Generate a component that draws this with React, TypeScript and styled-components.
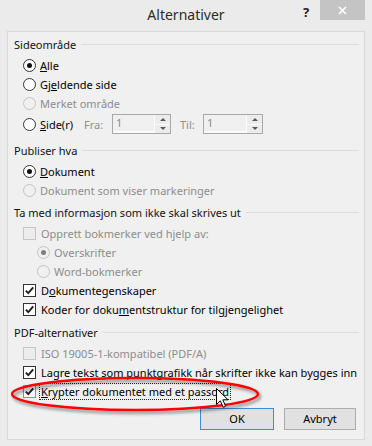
import React from "react"
import styled, { createGlobalStyle } from "styled-components"

const GlobalStyle = createGlobalStyle`
  html, body {
    margin: 0;
    padding: 0;
    background: #ebebeb;
  }
  body {
    font-family: "Noto Sans", "Segoe UI", sans-serif;
    font-size: 11px;
  }
`

const Window = styled.div`
  position: relative;
  width: 372px;
  height: 446px;
  display: flex;
  flex-direction: column;
  background: #ebebeb;
  overflow: hidden;
`

const TitleBar = styled.div`
  height: 31px;
  flex: none;
  display: grid;
  grid-template-columns: 1fr auto 1fr;
  align-items: start;
`

const Title = styled.div`
  grid-column: 2;
  padding-top: 4px;
  font-size: 14px;
  line-height: 22px;
  color: #2b2b2b;
`

const Caption = styled.div`
  grid-column: 3;
  justify-self: end;
  display: flex;
  margin-right: 7px;
`

const HelpButton = styled.div`
  width: 28px;
  height: 20px;
  padding-top: 2px;
  line-height: 20px;
  text-align: center;
  font-size: 13px;
  font-weight: bold;
  color: #222;
`

const CloseButton = styled.div`
  width: 45px;
  height: 20px;
  background: #c4c4c4;
  display: flex;
  align-items: center;
  justify-content: center;
`

const Panel = styled.div`
  flex: 1;
  margin: 0 7px 6px 7px;
  border: 1px solid #d9d9d9;
  background: #f0f0f0;
  padding: 2px 5px 0 6px;
  display: flex;
  flex-direction: column;
`

const Section = styled.div<{ $gap: number }>`
  margin-top: ${p => p.$gap}px;
  display: flex;
  flex-direction: column;
`

const Heading = styled.div`
  height: 20px;
  margin-bottom: 2px;
  display: flex;
  align-items: center;
  gap: 5px;
  color: #111;
  white-space: nowrap;

  &::after {
    content: "";
    flex: 1;
    border-top: 1px solid #dcdcdc;
  }
`

const Row = styled.div<{ $indent?: number; $h?: number; $disabled?: boolean }>`
  height: ${p => p.$h ?? 19}px;
  padding-left: ${p => p.$indent ?? 9}px;
  display: flex;
  align-items: center;
  color: ${p => (p.$disabled ? "#8d8d8d" : "#000")};
  white-space: nowrap;
`

const RadioCircle = styled.span<{ $checked?: boolean; $disabled?: boolean }>`
  box-sizing: border-box;
  width: 13px;
  height: 13px;
  margin-right: 4px;
  border-radius: 50%;
  border: 1px solid ${p => (p.$disabled ? "#c3c3c3" : "#333")};
  background: ${p => (p.$disabled ? "#f0f0f0" : "#fff")};
  display: flex;
  align-items: center;
  justify-content: center;
  flex: none;

  &::after {
    content: "";
    display: ${p => (p.$checked ? "block" : "none")};
    width: 5px;
    height: 5px;
    border-radius: 50%;
    background: ${p => (p.$disabled ? "#7f7f7f" : "#111")};
  }
`

const CheckBox = styled.span<{ $disabled?: boolean; $hover?: boolean }>`
  box-sizing: border-box;
  width: 13px;
  height: 13px;
  margin-right: 5px;
  border: 1px solid ${p => (p.$disabled ? "#c6c6c6" : p.$hover ? "#5b9fdf" : "#333")};
  background: ${p => (p.$disabled ? "#ececec" : "#fff")};
  display: flex;
  flex: none;
`

const FocusLabel = styled.span`
  margin-left: -2px;
  padding: 0 1px;
  line-height: 15px;
  border: 1px dotted #222;
`

const Key = styled.u`
  text-underline-offset: 1px;
`

const FieldLabel = styled.span<{ $w: number; $gap?: number }>`
  width: ${p => p.$w}px;
  margin-left: ${p => p.$gap ?? 0}px;
  color: #8d8d8d;
  flex: none;
`

const SideLabel = styled.span`
  width: 44px;
  flex: none;
`

const Spin = styled.div<{ $w: number }>`
  box-sizing: border-box;
  width: ${p => p.$w}px;
  height: 20px;
  border: 1px solid #a8a8a8;
  background: #f0f0f0;
  display: flex;
  flex: none;
`

const SpinValue = styled.div`
  flex: 1;
  padding-left: 3px;
  line-height: 16px;
  color: #8a8a8a;
  border-bottom: 2px solid #fbfbfb;
`

const SpinArrows = styled.div`
  width: 15px;
  display: flex;
  flex-direction: column;
  border-left: 1px solid #fbfbfb;
`

const SpinArrow = styled.div<{ $down?: boolean }>`
  flex: 1;
  display: flex;
  align-items: center;
  justify-content: center;
  background: #ececec;
  border-bottom: ${p => (p.$down ? "none" : "1px solid #fbfbfb")};

  &::after {
    content: "";
    border-left: 3px solid transparent;
    border-right: 3px solid transparent;
    ${p => (p.$down ? "border-top: 3px solid #5a5a5a;" : "border-bottom: 3px solid #5a5a5a;")}
  }
`

const ButtonRow = styled.div`
  margin-top: 7px;
  margin-right: 3px;
  display: flex;
  justify-content: flex-end;
  gap: 10px;
`

const Button = styled.div<{ $w: number; $default?: boolean }>`
  box-sizing: border-box;
  width: ${p => p.$w}px;
  height: 22px;
  line-height: 20px;
  text-align: center;
  background: #e1e1e1;
  border: 1px solid ${p => (p.$default ? "#3c8ddb" : "#adadad")};
  color: #000;
`

const Overlay = styled.svg`
  position: absolute;
  left: 0;
  top: 0;
  pointer-events: none;
`

const Check = () => (
  <svg width="11" height="11" viewBox="0 0 11 11">
    <path d="M1.8 5.6 L4.3 8.2 L9.2 2.3" fill="none" stroke="#1e1e1e" strokeWidth="1.9" />
  </svg>
)

type OptionProps = {
  checked?: boolean
  disabled?: boolean
  indent?: number
  children: React.ReactNode
}

const RadioOption = ({ checked, disabled, indent, children }: OptionProps) => (
  <Row $indent={indent} $disabled={disabled}>
    <RadioCircle $checked={checked} $disabled={disabled} />
    {children}
  </Row>
)

const CheckOption = ({ checked, disabled, indent, children }: OptionProps) => (
  <Row $indent={indent} $disabled={disabled}>
    <CheckBox $disabled={disabled}>{checked && <Check />}</CheckBox>
    {children}
  </Row>
)

const SpinBox = ({ w }: { w: number }) => (
  <Spin $w={w}>
    <SpinValue>1</SpinValue>
    <SpinArrows>
      <SpinArrow />
      <SpinArrow $down />
    </SpinArrows>
  </Spin>
)

export default function App() {
  return (
    <>
      <GlobalStyle />
      <Window>
        <TitleBar>
          <Title>Alternativer</Title>
          <Caption>
            <HelpButton>?</HelpButton>
            <CloseButton>
              <svg width="9" height="9" viewBox="0 0 9 9">
                <path d="M1 1 L8 8 M8 1 L1 8" stroke="#fff" strokeWidth="1.6" />
              </svg>
            </CloseButton>
          </Caption>
        </TitleBar>

        <Panel>
          <Section $gap={0}>
            <Heading>Sideområde</Heading>
            <RadioOption checked>
              <span><Key>A</Key>lle</span>
            </RadioOption>
            <RadioOption>
              <span>Gj<Key>e</Key>ldende side</span>
            </RadioOption>
            <RadioOption disabled>Merket område</RadioOption>
            <Row $h={22}>
              <RadioCircle />
              <SideLabel><Key>S</Key>ide(r)</SideLabel>
              <FieldLabel $w={28}>Fra:</FieldLabel>
              <SpinBox w={59} />
              <FieldLabel $w={23} $gap={9}>Til:</FieldLabel>
              <SpinBox w={60} />
            </Row>
          </Section>

          <Section $gap={5}>
            <Heading>Publiser hva</Heading>
            <RadioOption checked>
              <span><Key>D</Key>okument</span>
            </RadioOption>
            <RadioOption disabled>Dokument som viser markeringer</RadioOption>
          </Section>

          <Section $gap={2}>
            <Heading>Ta med informasjon som ikke skal skrives ut</Heading>
            <CheckOption disabled>Opprett bokmerker ved hjelp av:</CheckOption>
            <RadioOption checked disabled indent={23}>Overskrifter</RadioOption>
            <RadioOption disabled indent={23}>Word-bokmerker</RadioOption>
            <CheckOption checked>
              <span>D<Key>o</Key>kumentegenskaper</span>
            </CheckOption>
            <CheckOption checked>
              <span>Koder for doku<Key>m</Key>entstruktur for tilgjengelighet</span>
            </CheckOption>
          </Section>

          <Section $gap={3}>
            <Heading>PDF-alternativer</Heading>
            <CheckOption disabled>ISO 19005-1-kompatibel (PDF/A)</CheckOption>
            <CheckOption checked>Lagre tekst som punktgrafikk når skrifter ikke kan bygges inn</CheckOption>
            <Row>
              <CheckBox $hover><Check /></CheckBox>
              <FocusLabel><Key>K</Key>rypter dokumentet med et passord</FocusLabel>
            </Row>
          </Section>

          <ButtonRow>
            <Button $w={74} $default>OK</Button>
            <Button $w={72}>Avbryt</Button>
          </ButtonRow>
        </Panel>

        <Overlay width="372" height="446" viewBox="0 0 372 446">
          <defs>
            <filter id="shadow" x="-10%" y="-50%" width="120%" height="200%">
              <feDropShadow dx="2" dy="2.5" stdDeviation="1.5" floodColor="#000" floodOpacity="0.45" />
            </filter>
          </defs>
          <ellipse cx="135" cy="394" rx="123" ry="16" fill="none" stroke="#ff0000" strokeWidth="2.4" filter="url(#shadow)" />
          <path
            d="M216.5 388.5 V404.5 L220.3 400.8 L223.2 407.3 L225.6 406.2 L222.8 399.8 H228 Z"
            fill="#fff"
            stroke="#000"
            strokeWidth="1"
            strokeLinejoin="miter"
          />
        </Overlay>
      </Window>
    </>
  )
}
